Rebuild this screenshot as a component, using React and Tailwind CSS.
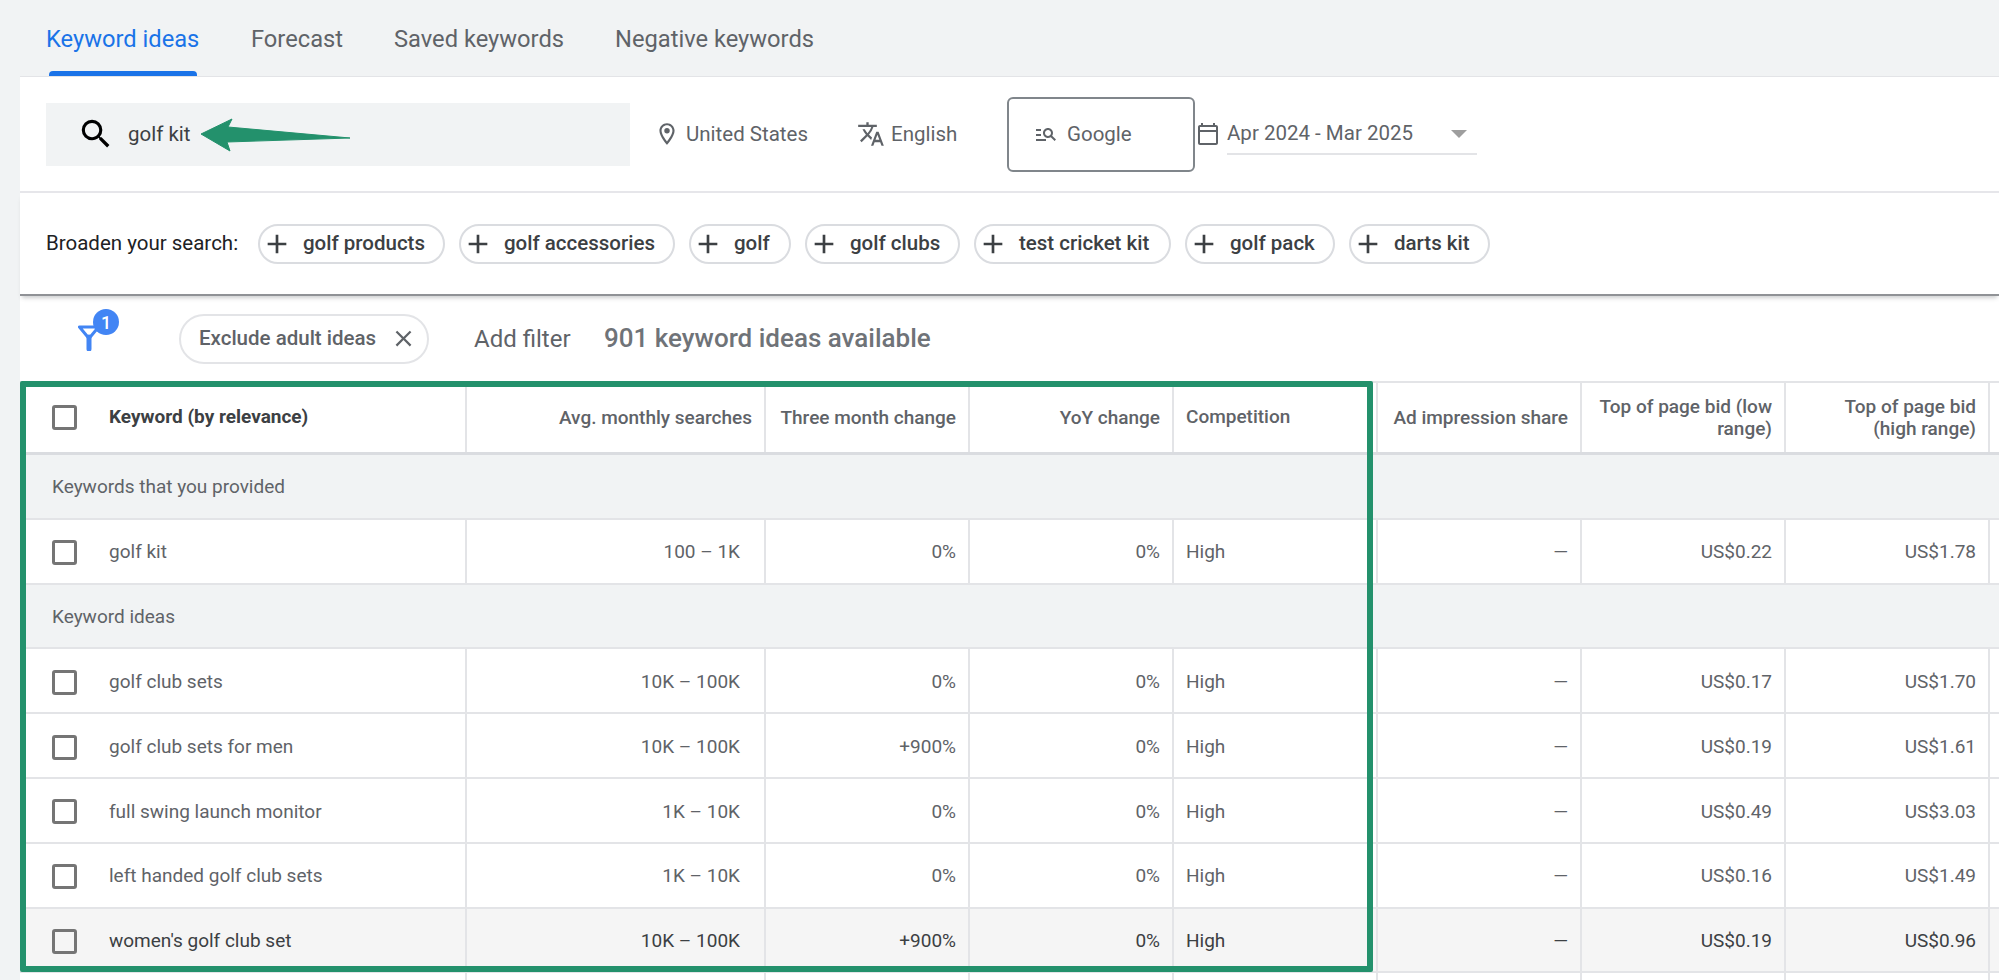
import React from "react";
import { MdSearch, MdOutlineLocationOn, MdTranslate, MdManageSearch, MdOutlineCalendarToday, MdAdd, MdClose } from "react-icons/md";

const tabs = ["Forecast", "Saved keywords", "Negative keywords"];
const chips = [
  ["golf products", "w-[187px]"],
  ["golf accessories", "w-[216px]"],
  ["golf", "w-[102px]"],
  ["golf clubs", "w-[155px]"],
  ["test cricket kit", "w-[197px]"],
  ["golf pack", "w-[150px]"],
  ["darts kit", "w-[141px]"],
];

const colsClass = "grid grid-cols-[447px_299px_204px_204px_204px_204px_204px_204px_9px]";

const rows = [
  { group: "Keywords that you provided" },
  { kw: "golf kit", avg: "100 – 1K", three: "0%", yoy: "0%", low: "US$0.22", high: "US$1.78" },
  { group: "Keyword ideas" },
  { kw: "golf club sets", avg: "10K – 100K", three: "0%", yoy: "0%", low: "US$0.17", high: "US$1.70" },
  { kw: "golf club sets for men", avg: "10K – 100K", three: "+900%", yoy: "0%", low: "US$0.19", high: "US$1.61" },
  { kw: "full swing launch monitor", avg: "1K – 10K", three: "0%", yoy: "0%", low: "US$0.49", high: "US$3.03" },
  { kw: "left handed golf club sets", avg: "1K – 10K", three: "0%", yoy: "0%", low: "US$0.16", high: "US$1.49" },
  { kw: "women's golf club set", avg: "10K – 100K", three: "+900%", yoy: "0%", low: "US$0.19", high: "US$0.96", hover: true },
];

function Checkbox() {
  return <span className="w-[25px] h-[25px] border-[3px] border-[#757575] rounded-[3px] shrink-0" />;
}

function Cell({ children, right, hover, wide }) {
  return (
    <div className={`flex items-center pt-[3px] pl-[12px] ${wide ? "pr-[24px]" : "pr-[12px]"} border-r-[2px] border-[#e3e4e7] ${right ? "justify-end" : ""} ${hover ? "bg-[#f5f5f5]" : ""}`}>
      {children}
    </div>
  );
}

function HeadCell({ children }) {
  return (
    <div className="flex items-center justify-end text-right px-[12px] border-r-[2px] border-[#e3e4e7] font-medium leading-[22px]">
      {children}
    </div>
  );
}

function FilterIcon() {
  return (
    <svg viewBox="0 0 22 26" className="absolute left-[58px] top-[29px] w-[22px] h-[26px]">
      <path d="M1.5 2h19L11 13.5z" fill="none" stroke="#4285f4" strokeWidth="3" strokeLinejoin="round" />
      <path d="M11 12v12" stroke="#4285f4" strokeWidth="5" strokeLinecap="round" />
    </svg>
  );
}

export default function App() {
  return (
    <div className="h-[980px] overflow-hidden bg-[#f1f3f4] pl-[20px] text-[#5f6368] font-['Roboto',sans-serif]">
      {/* tabs */}
      <div className="h-[77px] flex gap-[51px] pl-[26px] border-b border-[#e3e4e7] text-[23.7px]">
        <div className="relative w-[154px] pt-[24px] leading-[30px] text-[#1a73e8] whitespace-nowrap">
          Keyword ideas
          <span className="absolute left-[3px] right-[3px] bottom-0 h-[5px] rounded-t-[4px] bg-[#1a73e8]" />
        </div>
        {tabs.map((t) => (
          <div key={t} className="pt-[24px] leading-[30px] whitespace-nowrap">{t}</div>
        ))}
      </div>

      <div className="bg-white">
        {/* search row */}
        <div className="h-[116px] pl-[26px] flex items-center border-b-[2px] border-[#e6e6ea] text-[20.5px]">
          <div className="relative w-[584px] h-[63px] bg-[#f1f3f4] flex items-center pl-[31px] text-[#3c4043]">
            <MdSearch className="w-[38px] h-[38px] text-black mr-[13px]" />
            <span>golf kit</span>
            <svg viewBox="0 0 160 40" className="absolute left-[153px] top-[14px] w-[160px] h-[40px]">
              <path d="M2 17L33 2L29 10L151 21L28 25L31 34z" fill="#23916c" stroke="#23916c" strokeLinejoin="round" />
            </svg>
          </div>
          <MdOutlineLocationOn className="ml-[24px] w-[26px] h-[26px]" />
          <span className="ml-[6px] w-[121px] whitespace-nowrap">United States</span>
          <MdTranslate className="ml-[50px] w-[28px] h-[28px]" />
          <span className="ml-[6px] w-[65px] whitespace-nowrap">English</span>
          <div className="ml-[51px] w-[188px] h-[75px] border-[2px] border-[#80868b] rounded-[6px] flex items-center pl-[25px]">
            <MdManageSearch className="w-[24px] h-[24px]" />
            <span className="ml-[9px]">Google</span>
          </div>
          <MdOutlineCalendarToday className="ml-[1px] w-[24px] h-[24px]" />
          <div className="relative ml-[7px] w-[250px] h-[41px] flex items-center border-b-[2px] border-[#e3e4e7]">
            <span className="whitespace-nowrap">Apr 2024 - Mar 2025</span>
            <span className="absolute right-[10px] top-[16px] w-0 h-0 border-x-[8px] border-x-transparent border-t-[8px] border-t-[#9e9e9e]" />
          </div>
        </div>

        {/* broaden */}
        <div className="h-[103px] pl-[26px] flex items-center gap-[14px] border-b-[2px] border-b-[#909296] shadow-[0_4px_4px_-2px_rgba(60,64,67,0.25)] relative text-[20.5px]">
          <span className="w-[198px] text-[#202124] whitespace-nowrap">Broaden your search:</span>
          {chips.map(([label, w]) => (
            <div key={label} className={`${w} h-[40px] flex items-center border-[2px] border-[#dadce0] rounded-[20px] pl-[1px] text-[#3c4043] font-medium whitespace-nowrap`}>
              <MdAdd className="w-[32px] h-[32px] shrink-0" />
              <span className="ml-[10px]">{label}</span>
            </div>
          ))}
        </div>

        {/* filter row */}
        <div className="relative h-[85px] flex items-center">
          <FilterIcon />
          <span className="absolute left-[73px] top-[13px] w-[26px] h-[26px] rounded-full bg-[#4285f4] text-white text-[18px] font-medium flex items-center justify-center">1</span>
          <div className="ml-[159px] w-[250px] h-[50px] flex items-center border-[2px] border-[#e3e4e7] rounded-[25px] pl-[18px] text-[20.5px] font-medium whitespace-nowrap">
            <span className="w-[177px]">Exclude adult ideas</span>
            <MdClose className="ml-[14px] w-[27px] h-[27px]" />
          </div>
          <span className="ml-[45px] w-[96px] text-[24px] whitespace-nowrap">Add filter</span>
          <span className="ml-[34px] text-[26px] font-medium text-[#6f7378] whitespace-nowrap">901 keyword ideas available</span>
        </div>

        {/* table */}
        <div className="relative text-[19px]">
          <div className={`${colsClass} h-[74px] border-t-[2px] border-[#e3e4e7] border-b-[3px] border-b-[#dadce0]`}>
            <div className="flex items-center pl-[32px] gap-[32px] border-r-[2px] border-[#e3e4e7] font-bold text-[#3c4043] whitespace-nowrap">
              <Checkbox />
              <span>Keyword (by relevance)</span>
            </div>
            <HeadCell>Avg. monthly searches</HeadCell>
            <HeadCell>Three month change</HeadCell>
            <HeadCell>YoY change</HeadCell>
            <div className="flex items-center px-[12px] border-r-[2px] border-[#e3e4e7] font-medium">Competition</div>
            <HeadCell>Ad impression share</HeadCell>
            <HeadCell>Top of page bid (low range)</HeadCell>
            <HeadCell>Top of page bid (high range)</HeadCell>
          </div>
          {rows.map((r) =>
            r.group ? (
              <div key={r.group} className="h-[64.8px] pl-[32px] pt-[2px] flex items-center bg-[#f1f3f4] border-b-[2px] border-[#e3e4e7]">
                {r.group}
              </div>
            ) : (
              <div key={r.kw} className={`${colsClass} h-[64.8px] border-b-[2px] border-[#e3e4e7] ${r.hover ? "text-[#3c4043]" : ""}`}>
                <div className={`flex items-center pt-[3px] pl-[32px] gap-[32px] border-r-[2px] border-[#e3e4e7] whitespace-nowrap ${r.hover ? "bg-[#f5f5f5]" : ""}`}>
                  <Checkbox />
                  <span>{r.kw}</span>
                </div>
                <Cell right wide hover={r.hover}>{r.avg}</Cell>
                <Cell right hover={r.hover}>{r.three}</Cell>
                <Cell right hover={r.hover}>{r.yoy}</Cell>
                <Cell hover={r.hover}>High</Cell>
                <Cell right hover={r.hover}>—</Cell>
                <Cell right hover={r.hover}>{r.low}</Cell>
                <Cell right hover={r.hover}>{r.high}</Cell>
                <div className={r.hover ? "bg-[#f5f5f5]" : ""} />
              </div>
            )
          )}
          <div className={`${colsClass} h-[20px]`}>
            {[0, 1, 2, 3, 4, 5, 6, 7].map((i) => (
              <div key={i} className="border-r-[2px] border-[#e3e4e7]" />
            ))}
          </div>

          {/* green highlight over the first columns */}
          <div className="absolute left-0 top-0 w-[1353px] h-[591px] border-[6px] border-[#23916c] rounded-[2px]" />
        </div>
      </div>
    </div>
  );
}
